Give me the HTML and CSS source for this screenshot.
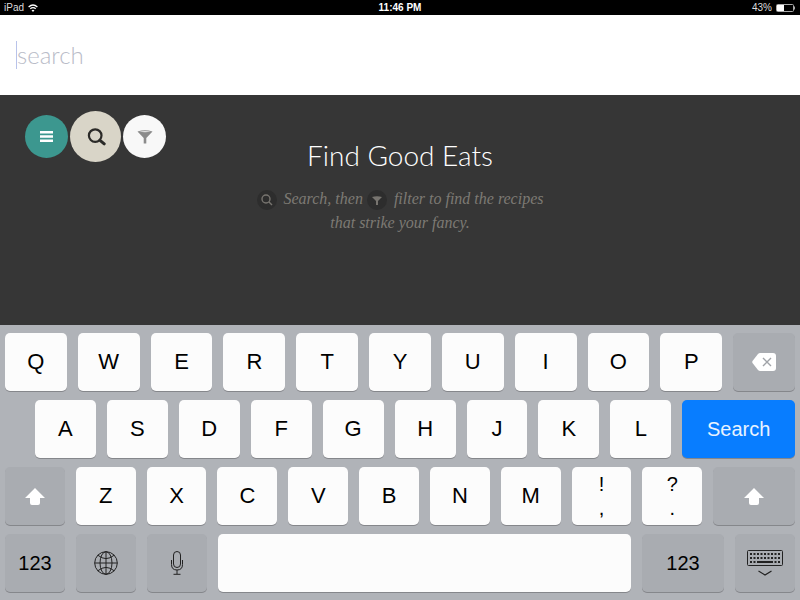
FILE: index.html
```html
<!DOCTYPE html>
<html lang="en">
<head>
    <meta charset="UTF-8">
    <meta name="viewport" content="width=device-width, initial-scale=1.0">
    <title>Find Good Eats</title>
    <link rel="stylesheet" href="styles.css">
</head>
<body>
    <header class="status-bar">
        <div class="status-left">
            <span>iPad</span>
            <svg width="10" height="8" viewBox="0 0 10 8" fill="none" stroke="#fff" stroke-width="1.3">
                <path d="M0.6 3 Q5 -1 9.4 3"/>
                <path d="M2.3 4.8 Q5 2.4 7.7 4.8"/>
                <path d="M5 8 L3.5 6.3 Q5 5.1 6.5 6.3 Z" fill="#fff" stroke="none"/>
            </svg>
        </div>
        <div class="clock">11:46 PM</div>
        <div class="status-right">
            <span>43%</span>
            <svg width="20" height="8" viewBox="0 0 20 8">
                <rect x="0.5" y="0.5" width="17" height="7" rx="1" fill="none" stroke="#aaa"/>
                <rect x="1" y="1" width="7" height="6" fill="#fff"/>
                <path d="M18.5 2.5 V5.5" stroke="#aaa"/>
            </svg>
        </div>
    </header>

    <form class="search-bar">
        <span class="caret"></span>
        <input type="text" placeholder="search" aria-label="search">
    </form>

    <main>
        <nav class="toolbar">
            <button class="round menu" aria-label="Menu">
                <svg width="13" height="11" viewBox="0 0 13 11" stroke="#fff" stroke-width="2.6">
                    <path d="M0 1.3 H13 M0 5.5 H13 M0 9.7 H13"/>
                </svg>
            </button>
            <button class="round find" aria-label="Search">
                <svg width="20" height="18" viewBox="0 0 20 18" fill="none" stroke="#2b2a28">
                    <circle cx="9.2" cy="7.6" r="6.3" stroke-width="2.2"/>
                    <path d="M14 12.3 L18.2 15.8" stroke-width="3" stroke-linecap="round"/>
                </svg>
            </button>
            <button class="round filter" aria-label="Filter">
                <svg width="16" height="14" viewBox="0 0 16 14" fill="#8b8b8b">
                    <path d="M0.5 1.5 Q8 -0.8 15.5 1.5 L9.3 8 V13.5 H6.7 V8 Z"/>
                    <path d="M2 1.6 Q8 0.3 14 1.6 Q8 2.7 2 1.6 Z" fill="#e4e4e4"/>
                </svg>
            </button>
        </nav>
        <div class="intro">
            <h1>Find Good Eats</h1>
            <p>
                <span class="badge"><svg width="12" height="12" viewBox="0 0 12 12" fill="none" stroke="#77746f" stroke-width="1.4"><circle cx="5" cy="5" r="4"/><path d="M8 8 L11 11"/></svg></span>
                Search, then
                <span class="badge"><svg width="10" height="9" viewBox="0 0 10 9" fill="#77746f"><path d="M0 1 Q5 -0.6 10 1 L6 5 V9 H4 V5 Z"/></svg></span>
                filter to find the recipes<br>that strike your fancy.
            </p>
        </div>
    </main>

    <section class="keyboard">
        <div class="row">
            <button class="key">Q</button>
            <button class="key">W</button>
            <button class="key">E</button>
            <button class="key">R</button>
            <button class="key">T</button>
            <button class="key">Y</button>
            <button class="key">U</button>
            <button class="key">I</button>
            <button class="key">O</button>
            <button class="key">P</button>
            <button class="key dark" aria-label="Delete">
                <svg width="24" height="18" viewBox="0 0 24 18">
                    <path d="M8 0 H21 Q24 0 24 3 V15 Q24 18 21 18 H8 Q7 18 6 17 L0.5 10 Q0 9 0.5 8 L6 1 Q7 0 8 0 Z" fill="#fff"/>
                    <path d="M11 5 L19 13 M19 5 L11 13" stroke="#a0a3a8" stroke-width="1.4"/>
                </svg>
            </button>
        </div>
        <div class="row indent">
            <button class="key">A</button>
            <button class="key">S</button>
            <button class="key">D</button>
            <button class="key">F</button>
            <button class="key">G</button>
            <button class="key">H</button>
            <button class="key">J</button>
            <button class="key">K</button>
            <button class="key">L</button>
            <button class="key go">Search</button>
        </div>
        <div class="row">
            <button class="key dark" aria-label="Shift">
                <svg width="20" height="17" viewBox="0 0 20 17" fill="#fff"><path d="M10 0 L20 10 H15 V15 Q15 17 13 17 H7 Q5 17 5 15 V10 H0 Z"/></svg>
            </button>
            <button class="key">Z</button>
            <button class="key">X</button>
            <button class="key">C</button>
            <button class="key">V</button>
            <button class="key">B</button>
            <button class="key">N</button>
            <button class="key">M</button>
            <button class="key double"><span>!</span><span>,</span></button>
            <button class="key double"><span>?</span><span>.</span></button>
            <button class="key dark wide" aria-label="Shift">
                <svg width="20" height="17" viewBox="0 0 20 17" fill="#fff"><path d="M10 0 L20 10 H15 V15 Q15 17 13 17 H7 Q5 17 5 15 V10 H0 Z"/></svg>
            </button>
        </div>
        <div class="row">
            <button class="key dark label">123</button>
            <button class="key dark" aria-label="Next keyboard">
                <svg width="24" height="24" viewBox="0 0 24 24" fill="none" stroke="#222">
                    <circle cx="12" cy="12" r="11.3"/>
                    <ellipse cx="12" cy="12" rx="6" ry="11.3"/>
                    <path d="M12 0.7 V23.3 M0.7 12 H23.3 M3.8 4.2 Q12 11 20.2 4.2 M3.8 19.8 Q12 13 20.2 19.8"/>
                </svg>
            </button>
            <button class="key dark" aria-label="Dictate">
                <svg width="12" height="24" viewBox="0 0 12 24" fill="none" stroke="#222">
                    <rect x="2.5" y="0.5" width="7" height="16" rx="3.5"/>
                    <path d="M0.5 9 V13.5 Q0.5 19 6 19 Q11.5 19 11.5 13.5 V9 M6 19 V23 M2.5 23.3 H9.5"/>
                </svg>
            </button>
            <button class="key space" aria-label="Space"></button>
            <button class="key dark wide label">123</button>
            <button class="key dark" aria-label="Hide keyboard">
                <svg width="36" height="26" viewBox="0 0 36 26" fill="none" stroke="#222">
                    <rect x="0.5" y="0.5" width="35" height="15" rx="1"/>
                    <path d="M3 4 H33 M3 8 H33" stroke-width="2" stroke-dasharray="2 1.5"/>
                    <path d="M3 12 H9 M27.5 12 H33" stroke-width="2" stroke-dasharray="2 1.5"/>
                    <path d="M10 12 H26" stroke-width="2"/>
                    <path d="M11.5 21 L18 25 L24.5 21" stroke-width="1.2"/>
                </svg>
            </button>
        </div>
    </section>
</body>
</html>
```
FILE: styles.css
```css
* {
    box-sizing: border-box;
}

body {
    display: flex;
    flex-direction: column;
    min-height: 100vh;
    margin: 0;
    background: #363636;
    font-family: "Liberation Sans", Arial, sans-serif;
}

button {
    display: flex;
    align-items: center;
    justify-content: center;
    padding: 0;
    border: none;
    font-family: inherit;
    cursor: pointer;
}

/* status bar */
.status-bar {
    display: grid;
    grid-template-columns: 1fr auto 1fr;
    align-items: center;
    height: 15px;
    padding: 0 4px;
    background: #000;
    color: #ddd;
    font-size: 10px;
    line-height: 15px;
}

.status-left, .status-right {
    display: flex;
    align-items: center;
    gap: 4px;
}

.status-right {
    justify-content: flex-end;
}

.clock {
    color: #fff;
    font-weight: bold;
}

/* search field */
.search-bar {
    display: flex;
    align-items: center;
    height: 80px;
    padding: 0 16px;
    background: #fff;
}

.caret {
    width: 1px;
    height: 28px;
    background: #b9c3ea;
}

.search-bar input {
    flex: 1;
    min-width: 0;
    padding: 0 0 2px;
    border: none;
    outline: none;
    background: none;
    color: #444;
    font-family: Lato, sans-serif;
    font-size: 24px;
    font-weight: 300;
}

.search-bar input::placeholder {
    color: #b9bcc8;
    opacity: 1;
}

/* content */
main {
    display: grid;
    grid-template-columns: 1fr auto 1fr;
    align-items: start;
    flex: 1;
    padding: 16px 25px;
}

.toolbar {
    display: flex;
    align-items: center;
    gap: 2px;
}

.round {
    flex: none;
    width: 43px;
    height: 43px;
    border-radius: 50%;
}

.menu {
    background: #3c978f;
}

.find {
    width: 51px;
    height: 51px;
    background: #d9d5c8;
}

.filter {
    background: #f8f8f8;
}

.intro {
    padding-top: 28px;
    text-align: center;
}

h1 {
    margin: 0;
    color: #fff;
    font-family: Lato, sans-serif;
    font-size: 28px;
    font-weight: 300;
    line-height: 32px;
}

.intro p {
    margin: 16px 0 0;
    color: #7d7a74;
    font-family: "Liberation Serif", "Times New Roman", serif;
    font-size: 16px;
    font-style: italic;
    line-height: 24px;
}

.badge {
    display: inline-flex;
    align-items: center;
    justify-content: center;
    width: 20px;
    height: 20px;
    margin-right: 3px;
    border-radius: 50%;
    background: #2d2d2d;
    vertical-align: middle;
}

/* keyboard */
.keyboard {
    display: flex;
    flex-direction: column;
    gap: 9px;
    padding: 8px 5px;
    background: #b0b3b8;
}

.row {
    display: flex;
    gap: 11px;
}

.indent {
    padding-left: 30px;
}

.key {
    flex: 60 1 0;
    min-width: 0;
    height: 58px;
    border-radius: 5px;
    background: #fcfcfc;
    box-shadow: 0 1px 0 #85878b;
    color: #000;
    font-size: 22px;
}

.dark {
    background: #a9acb1;
}

.wide {
    flex-grow: 82;
}

.space {
    flex-grow: 413;
}

.go {
    flex-grow: 111;
    background: #087dff;
    color: #e8f3ff;
    font-size: 20px;
}

.label {
    font-size: 20px;
}

.double {
    flex-direction: column;
    font-size: 20px;
    line-height: 24px;
}
```
